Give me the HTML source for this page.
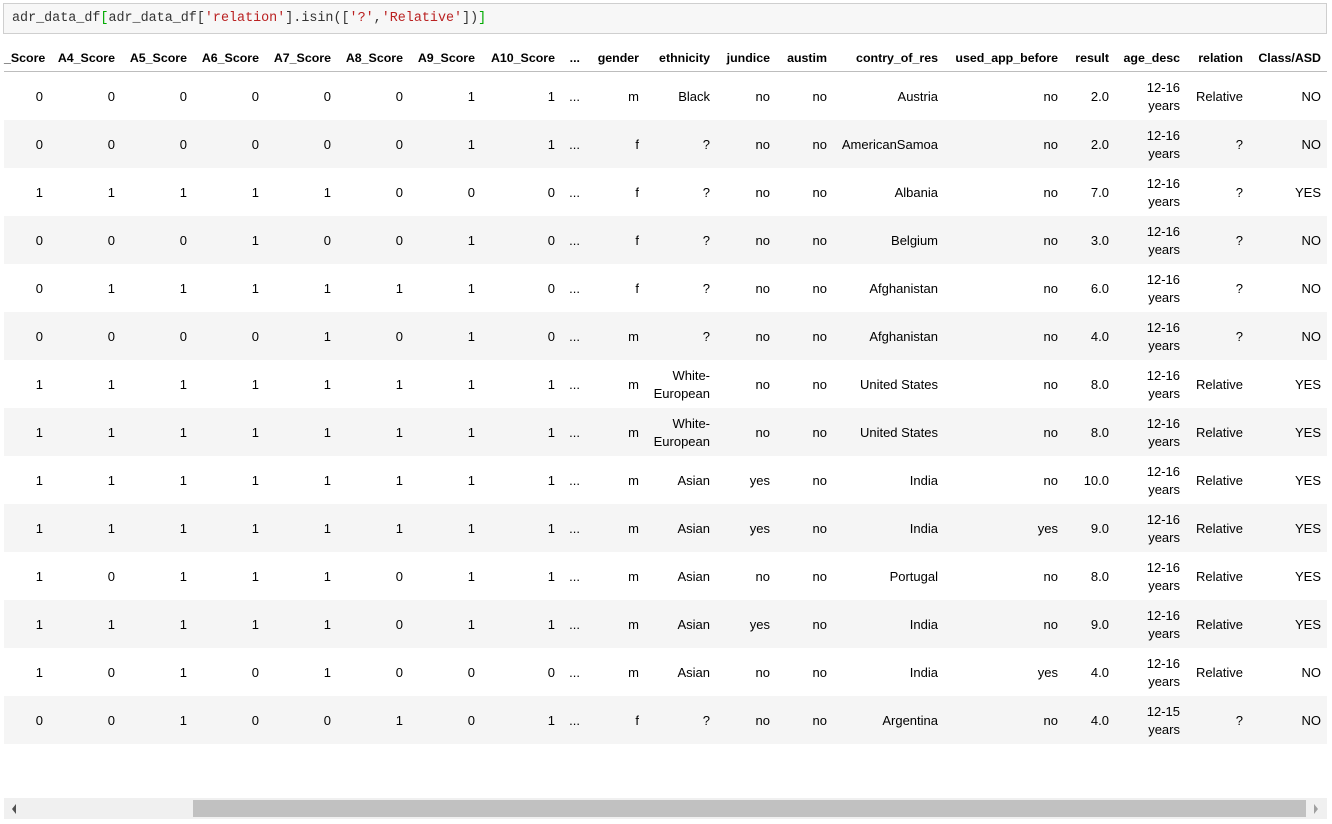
<!DOCTYPE html>
<html><head><meta charset="utf-8"><style>
body{margin:0;background:#fff;width:1332px;height:824px;overflow:hidden;position:relative;font-family:"Liberation Sans",sans-serif;font-size:13px;color:#000}
.code{position:absolute;left:3px;top:3px;height:31px;background:#f7f7f7;border:1px solid #cfcfcf;font-family:"Liberation Mono",monospace;font-size:13.4px;line-height:29px;padding-left:8px;box-sizing:border-box;width:1324px;color:#333}
.s{color:#ba2121}.g{color:#0a0}
table{position:absolute;left:4px;top:45px;border-collapse:collapse;table-layout:fixed;width:1323px}
td,th{padding:0;text-align:right;white-space:nowrap;overflow:visible}
th{height:26px;font-weight:bold;font-size:12.4px;border-bottom:1px solid #bdbdbd;vertical-align:middle}
td{height:48px;line-height:18px;padding-top:2px;box-sizing:border-box}
tbody tr:nth-child(even){background:#f5f5f5}
.sb{position:absolute;left:4px;top:798px;width:1323px;height:21px;background:#f0f0f0}
.th{position:absolute;left:193px;top:800px;width:1113px;height:17px;background:#c1c1c1}
</style></head><body>
<div class="code">adr_data_df<span class="g">[</span>adr_data_df[<span class="s">'relation'</span>].isin([<span class="s">'?'</span>,<span class="s">'Relative'</span>])<span class="g">]</span></div>
<table>
<colgroup><col style="width:39px"><col style="width:72px"><col style="width:72px"><col style="width:72px"><col style="width:72px"><col style="width:72px"><col style="width:72px"><col style="width:80px"><col style="width:25px"><col style="width:59px"><col style="width:71px"><col style="width:60px"><col style="width:57px"><col style="width:111px"><col style="width:120px"><col style="width:51px"><col style="width:71px"><col style="width:63px"><col style="width:78px"><col style="width:6px"></colgroup>
<thead><tr><th>_Score</th><th>A4_Score</th><th>A5_Score</th><th>A6_Score</th><th>A7_Score</th><th>A8_Score</th><th>A9_Score</th><th>A10_Score</th><th>...</th><th>gender</th><th>ethnicity</th><th>jundice</th><th>austim</th><th>contry_of_res</th><th>used_app_before</th><th>result</th><th>age_desc</th><th>relation</th><th>Class/ASD</th><th></th></tr></thead>
<tbody>
<tr><td>0</td><td>0</td><td>0</td><td>0</td><td>0</td><td>0</td><td>1</td><td>1</td><td>...</td><td>m</td><td>Black</td><td>no</td><td>no</td><td>Austria</td><td>no</td><td>2.0</td><td>12-16<br>years</td><td>Relative</td><td>NO</td><td></td></tr>
<tr><td>0</td><td>0</td><td>0</td><td>0</td><td>0</td><td>0</td><td>1</td><td>1</td><td>...</td><td>f</td><td>?</td><td>no</td><td>no</td><td>AmericanSamoa</td><td>no</td><td>2.0</td><td>12-16<br>years</td><td>?</td><td>NO</td><td></td></tr>
<tr><td>1</td><td>1</td><td>1</td><td>1</td><td>1</td><td>0</td><td>0</td><td>0</td><td>...</td><td>f</td><td>?</td><td>no</td><td>no</td><td>Albania</td><td>no</td><td>7.0</td><td>12-16<br>years</td><td>?</td><td>YES</td><td></td></tr>
<tr><td>0</td><td>0</td><td>0</td><td>1</td><td>0</td><td>0</td><td>1</td><td>0</td><td>...</td><td>f</td><td>?</td><td>no</td><td>no</td><td>Belgium</td><td>no</td><td>3.0</td><td>12-16<br>years</td><td>?</td><td>NO</td><td></td></tr>
<tr><td>0</td><td>1</td><td>1</td><td>1</td><td>1</td><td>1</td><td>1</td><td>0</td><td>...</td><td>f</td><td>?</td><td>no</td><td>no</td><td>Afghanistan</td><td>no</td><td>6.0</td><td>12-16<br>years</td><td>?</td><td>NO</td><td></td></tr>
<tr><td>0</td><td>0</td><td>0</td><td>0</td><td>1</td><td>0</td><td>1</td><td>0</td><td>...</td><td>m</td><td>?</td><td>no</td><td>no</td><td>Afghanistan</td><td>no</td><td>4.0</td><td>12-16<br>years</td><td>?</td><td>NO</td><td></td></tr>
<tr><td>1</td><td>1</td><td>1</td><td>1</td><td>1</td><td>1</td><td>1</td><td>1</td><td>...</td><td>m</td><td>White-<br>European</td><td>no</td><td>no</td><td>United States</td><td>no</td><td>8.0</td><td>12-16<br>years</td><td>Relative</td><td>YES</td><td></td></tr>
<tr><td>1</td><td>1</td><td>1</td><td>1</td><td>1</td><td>1</td><td>1</td><td>1</td><td>...</td><td>m</td><td>White-<br>European</td><td>no</td><td>no</td><td>United States</td><td>no</td><td>8.0</td><td>12-16<br>years</td><td>Relative</td><td>YES</td><td></td></tr>
<tr><td>1</td><td>1</td><td>1</td><td>1</td><td>1</td><td>1</td><td>1</td><td>1</td><td>...</td><td>m</td><td>Asian</td><td>yes</td><td>no</td><td>India</td><td>no</td><td>10.0</td><td>12-16<br>years</td><td>Relative</td><td>YES</td><td></td></tr>
<tr><td>1</td><td>1</td><td>1</td><td>1</td><td>1</td><td>1</td><td>1</td><td>1</td><td>...</td><td>m</td><td>Asian</td><td>yes</td><td>no</td><td>India</td><td>yes</td><td>9.0</td><td>12-16<br>years</td><td>Relative</td><td>YES</td><td></td></tr>
<tr><td>1</td><td>0</td><td>1</td><td>1</td><td>1</td><td>0</td><td>1</td><td>1</td><td>...</td><td>m</td><td>Asian</td><td>no</td><td>no</td><td>Portugal</td><td>no</td><td>8.0</td><td>12-16<br>years</td><td>Relative</td><td>YES</td><td></td></tr>
<tr><td>1</td><td>1</td><td>1</td><td>1</td><td>1</td><td>0</td><td>1</td><td>1</td><td>...</td><td>m</td><td>Asian</td><td>yes</td><td>no</td><td>India</td><td>no</td><td>9.0</td><td>12-16<br>years</td><td>Relative</td><td>YES</td><td></td></tr>
<tr><td>1</td><td>0</td><td>1</td><td>0</td><td>1</td><td>0</td><td>0</td><td>0</td><td>...</td><td>m</td><td>Asian</td><td>no</td><td>no</td><td>India</td><td>yes</td><td>4.0</td><td>12-16<br>years</td><td>Relative</td><td>NO</td><td></td></tr>
<tr><td>0</td><td>0</td><td>1</td><td>0</td><td>0</td><td>1</td><td>0</td><td>1</td><td>...</td><td>f</td><td>?</td><td>no</td><td>no</td><td>Argentina</td><td>no</td><td>4.0</td><td>12-15<br>years</td><td>?</td><td>NO</td><td></td></tr>
</tbody></table>
<div class="sb"></div><div class="th"></div>
<svg style="position:absolute;left:10px;top:803px" width="8" height="12"><path d="M6 1L2 6L6 11Z" fill="#505050"/></svg>
<svg style="position:absolute;left:1312px;top:803px" width="8" height="12"><path d="M2 1L6 6L2 11Z" fill="#a0a0a0"/></svg>
</body></html>
